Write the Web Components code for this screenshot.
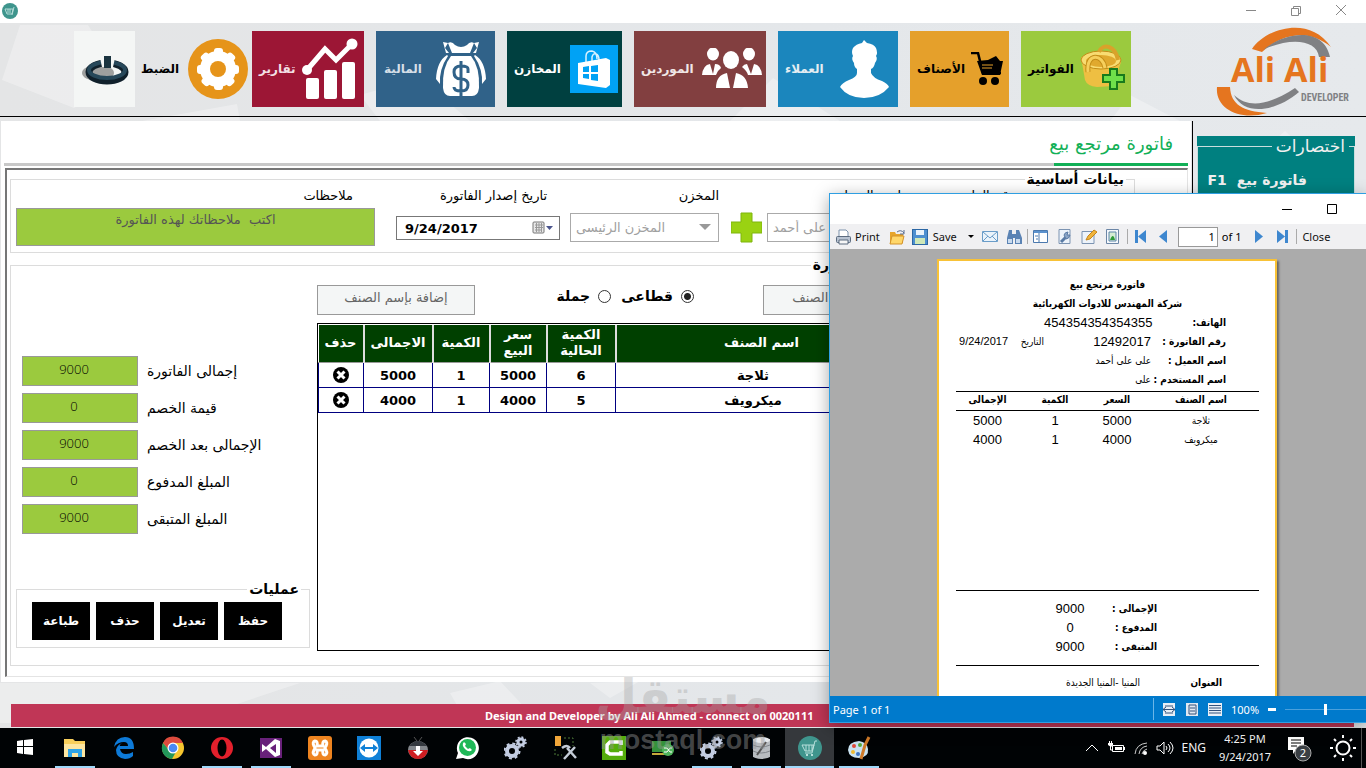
<!DOCTYPE html>
<html lang="ar">
<head>
<meta charset="utf-8">
<title>فاتورة مرتجع بيع</title>
<style>
  html, body { margin: 0; height: 100%; }
  body { font-family: "DejaVu Sans", sans-serif; font-size: 12px; color: #000; overflow: hidden; background: #e4e6e8; }
</style>
</head>
<body>
<desk-top></desk-top>

<script>
const define = (name, html, setup) => {
  const tpl = document.createElement('template');
  tpl.innerHTML = html;
  customElements.define(name, class extends HTMLElement {
    constructor() {
      super();
      this.attachShadow({ mode: 'open' }).append(tpl.content.cloneNode(true));
    }
    connectedCallback() { if (setup) setup(this.shadowRoot, this); }
  });
};

/* ---------- navigation ---------- */
define('nav-tile', `
<style>
  :host { display: block; flex: none; width: var(--w); }
  button { display: flex; align-items: center; justify-content: space-between; direction: rtl; width: 100%; height: 76px; margin: 0; padding: var(--pad, 0 6px 0 7px); border: 0; background: var(--bg, transparent); color: var(--fg, #fff); font: bold 12px "DejaVu Sans", sans-serif; white-space: nowrap; }
  ::slotted(svg) { display: block; flex: none; }
</style>
<button type="button"><slot></slot><span></span></button>`, (r, h) => {
  const label = h.getAttribute('label');
  if (label) r.querySelector('span').textContent = label;
  else { r.querySelector('span').remove(); r.querySelector('button').style.justifyContent = 'center'; r.querySelector('button').setAttribute('aria-label', 'خروج'); }
});

define('brand-logo', `
<style>:host { display: block; flex: none; width: 142px; height: 90px; direction: ltr; } svg { display: block; }</style>
<svg width="142" height="90" viewBox="0 0 142 90">
  <path d="M37 22C50 2 94-13 116 20C96 3 70 4 47 25Z" fill="#e5751f"/>
  <path d="M48 23C68 6 108-2 115 30L104 30C102 12 74 10 48 23Z" fill="#808184"/>
  <path d="M2 60H15C16 78 28 84 52 86C25 94 0 82 2 60Z" fill="#e5751f"/>
  <path d="M19 68C34 82 54 78 80 61L84 65C62 84 30 90 19 68Z" fill="#808184"/>
  <text x="16" y="55" font-family="Open Sans, sans-serif" font-weight="700" font-size="34" fill="#e5751f">Ali Ali</text>
  <text x="86" y="74" font-family="Liberation Sans Narrow, Roboto Condensed, DejaVu Sans Condensed, sans-serif" font-weight="700" font-size="10" fill="#808184">DEVELOPER</text>
</svg>`);

define('main-nav', `
<style>
  :host { display: flex; direction: rtl; box-sizing: border-box; height: 94px; padding: 8px 9px 0; gap: 12px; border-bottom: 1px solid #000; align-items: flex-start; }
  brand-logo { margin-left: 72px; margin-top: -4px; }
  .set { margin-right: -8px; margin-left: -6px; }
</style>
<brand-logo></brand-logo>
<nav-tile label="الفواتير" style="--w:110px;--bg:#9bca3e;--fg:#000">
  <svg width="46" height="50" viewBox="0 0 46 50"><path d="M2 13L6 36Q8 42 18 43L34 42L42 18Z" fill="#eebf42"/><ellipse cx="22" cy="16" rx="20" ry="9" fill="#f8dc72" stroke="#c28d18"/><ellipse cx="22" cy="17" rx="15" ry="6" fill="#e0a92e"/><path d="M20 8C24-1 36 1 39 16" fill="none" stroke="#d9a22a" stroke-width="4"/><path d="M9 28C7 8 24 10 26 24" fill="none" stroke="#c28d18" stroke-width="5"/><path d="M9 28C7 8 24 10 26 24" fill="none" stroke="#f6cf5c" stroke-width="3"/><path d="M31 25h7v6h7v7h-7v7h-7v-7h-7v-7h7z" fill="#6fe04a" stroke="#187a1c" stroke-width="2"/></svg>
</nav-tile>
<nav-tile label="الأصناف" style="--w:99px;--bg:#e5a02b;--fg:#000">
  <svg width="32" height="34" viewBox="0 0 32 34"><path d="M0 1h7l5 20h18" fill="none" stroke="#000" stroke-width="2.5"/><path d="M6 9l11-1 8-4 4 5h3l-3 14H11z"/><path d="M11 13h11M11 16h10" stroke="#e5a02b"/><circle cx="12" cy="29" r="4"/><circle cx="24" cy="29" r="4"/></svg>
</nav-tile>
<nav-tile label="العملاء" style="--w:120px;--bg:#1b86bd;--fg:#e4edf2;--pad:0 9px 0 7px">
  <svg width="49" height="58" viewBox="0 0 49 58"><path d="M24 0L27 3Q34 4 36 8Q38 13 36 16Q38 19 35 23Q34 28 31 29L31 33Q33 38 42 41Q48 44 49 47Q40 58 24 58Q8 58 0 47Q2 43 9 40Q17 37 17 33V29Q14 27 14 23Q11 19 13 16Q11 12 13 8Q16 4 22 3Z" fill="#fff"/></svg>
</nav-tile>
<nav-tile label="الموردين" style="--w:132px;--bg:#823f40;--fg:#f0e6e6;--pad:0 4px 0 7px">
  <svg width="60" height="42" viewBox="0 0 60 42"><g fill="#fff"><ellipse cx="11" cy="6" rx="6" ry="6.500"/><ellipse cx="47" cy="6" rx="6" ry="6.500"/><path d="M0 27Q1 17 8 16L11 26L13 16Q18 16 19 20Q15 23 14 27ZM60 27Q59 17 52 16L49 26L45 16Q42 16 40 19Q45 23 46 27Z"/><ellipse cx="29" cy="12" rx="8" ry="9"/><path d="M14 40Q14 27 25 25L28 40ZM46 40Q45 27 34 25L31 40Z"/></g></svg>
</nav-tile>
<nav-tile label="المخازن" style="--w:115px;--bg:#004040;--pad:0 4px 0 7px">
  <svg width="48" height="48" viewBox="0 0 48 48"><path fill="#00a2f5" d="M0 0h48v48H0z"/><path d="M16 18V11Q16 6 22 6Q27 7 27 14M22 16V12Q23 8 26 9Q29 10 29 15" fill="none" stroke="#d8f2ff" stroke-width="1.500"/><path d="M8 18L36 13L40 15V40L36 43L8 39Z" fill="#fff"/><path d="M13 22L19 21V27H13ZM21 21L28 20V27H21ZM13 29H19V34L13 33ZM21 29H28V36L21 35Z" fill="#00a2f5"/></svg>
</nav-tile>
<nav-tile label="المالية" style="--w:119px;--bg:#306289;--fg:#d6dfe7;--pad:0 9px 0 8px">
  <svg width="50" height="56" viewBox="0 0 50 56"><g fill="#fff"><path d="M12 2Q16 0 19 4Q25 8 31 4Q34 0 38 2L34 12H16Z"/><path d="M15 15H35Q44 26 43 47Q42 55 36 55H14Q8 55 7 47Q6 26 15 15Z"/><path d="M11 14Q1 20 0 38L4 43Q3 28 12 15ZM39 14Q49 20 50 38L46 43Q47 28 38 15Z"/><path d="M7 1l5 1-3 5 4 5h-3zM43 1l-5 1 3 5-4 5h3z"/></g><path d="M32 32V28Q32 25 25 25Q18 25 18 31Q18 38 25 38Q32 38 32 44Q32 50 25 50Q18 50 18 46M25 20V55" fill="none" stroke="#306289" stroke-width="3"/></svg>
</nav-tile>
<nav-tile label="تقارير" style="--w:112px;--bg:#9c1635;--fg:#f2dfe3">
  <svg width="56" height="62" viewBox="0 0 56 62"><g fill="#fff"><circle cx="50" cy="6" r="5.500"/><circle cx="5" cy="32" r="5"/><rect x="4" y="40" width="13" height="21" rx="2"/><rect x="22" y="32" width="13" height="29" rx="2"/><rect x="40" y="24" width="13" height="37" rx="2"/></g><path d="M5 32L23 11L34 22L50 6" fill="none" stroke="#fff" stroke-width="5"/></svg>
</nav-tile>
<nav-tile class="set" label="الضبط" style="--w:107px;--fg:#000;--pad:0">
  <svg width="60" height="60" viewBox="0 0 60 60"><circle cx="30" cy="30" r="30" fill="#e6941a"/><g fill="#fff"><circle cx="30" cy="30" r="18"/><rect x="26" y="9" width="9" height="42" rx="3"/><rect x="26" y="9" width="9" height="42" rx="3" transform="rotate(45 30 30)"/><rect x="26" y="9" width="9" height="42" rx="3" transform="rotate(90 30 30)"/><rect x="26" y="9" width="9" height="42" rx="3" transform="rotate(135 30 30)"/></g><circle cx="30" cy="30" r="8" fill="#e6941a"/></svg>
</nav-tile>
<nav-tile style="--w:61px;--bg:#f4f6f5;--pad:0">
  <svg width="50" height="34" viewBox="0 0 50 34"><ellipse cx="18" cy="21" rx="16" ry="8" fill="#000" opacity=".35"/><ellipse cx="27" cy="20" rx="18" ry="9" fill="none" stroke="#10202b" stroke-width="7"/><ellipse cx="27" cy="18" rx="18" ry="8" fill="none" stroke="#27485a" stroke-width="4"/><path d="M20 6h15l-2 9H22z" fill="#f4f6f5"/><path d="M24 4h7v12h-7z" fill="#1b3440"/></svg>
</nav-tile>`);

/* ---------- form building blocks ---------- */
define('form-section', `
<style>
  :host { display: block; }
  fieldset { box-sizing: border-box; width: 100%; height: 100%; margin: 0; padding: 0; border: 1px solid #dcdcdc; direction: rtl; min-width: 0; }
  legend { padding: 0 2px; margin: 0 8px; height: 16px; font-size: 14px; line-height: 16px; font-weight: bold; }
  div { direction: ltr; }
</style>
<fieldset><legend></legend><div><slot></slot></div></fieldset>`, (r, h) => {
  r.querySelector('legend').textContent = h.getAttribute('legend');
});

const fieldCss = `
  :host { display: block; flex: none; width: var(--w); }
  label { display: block; height: 20px; font-size: 13px; line-height: 18px; direction: rtl; white-space: nowrap; }
  .box { display: flex; align-items: center; height: 40px; position: relative; }`;
const fieldSetup = (r, h) => {
  r.querySelector('label').textContent = h.getAttribute('label');
  const c = r.querySelector('input, select, textarea');
  const v = h.getAttribute('value');
  if (c.tagName === 'SELECT') c.append(new Option(v)); else if (c.tagName === 'TEXTAREA') c.placeholder = v; else c.value = v;
};
define('select-field', `
<style>${fieldCss}
  select { appearance: none; box-sizing: border-box; width: 100%; height: 29px; padding: 0 5px; border: 1px solid #aaa; border-radius: 0; background: #fff; color: #a0a0a0; opacity: 1; font: 13px "DejaVu Sans", sans-serif; }
  .box::after { content: ""; position: absolute; right: 8px; border: 6px solid transparent; border-top-color: #999; border-bottom: 0; }
</style>
<label for="c"></label><div class="box"><select id="c" disabled></select></div>`, fieldSetup);
define('date-field', `
<style>${fieldCss}
  label { padding-right: 13px; }
  .in { display: flex; box-sizing: border-box; align-items: center; width: 100%; height: 24px; border: 1px solid #777; background: #fff; margin-top: 2px; }
  input { flex: 1; min-width: 0; border: 0; padding: 0 8px; font: bold 13px "DejaVu Sans", sans-serif; background: none; }
  svg { flex: none; margin-right: 5px; }
</style>
<label for="c"></label><div class="box"><div class="in"><input id="c"><svg width="22" height="14"><rect x="1" y="1" width="11" height="11" rx="1" fill="#e8e8e8" stroke="#777"/><path d="M3 4h8M3 6.500h8M3 9h6M4.500 2v9M7 2v9M9.500 2v9" stroke="#999"/><path d="M14 5h7l-3.500 4z" fill="#4a548c"/></svg></div></div>`, fieldSetup);
define('notes-field', `
<style>${fieldCss}
  label { padding-right: 22px; }
  textarea { box-sizing: border-box; width: 100%; height: 38px; margin: 0; padding: 3px; border: 1px solid #999; resize: none; background: #9bca3e; text-align: center; direction: rtl; font: 13px/16px "DejaVu Sans", sans-serif; overflow: hidden; }
  textarea::placeholder { color: #555; opacity: 1; white-space: pre; }
</style>
<label for="c"></label><div class="box"><textarea id="c"></textarea></div>`, fieldSetup);
define('total-field', `
<style>
  :host { display: flex; align-items: center; gap: 9px; height: 30px; }
  input { box-sizing: border-box; width: 116px; height: 30px; padding: 0 12px 4px 0; border: 1px solid #999; background: #9bca3e; color: #000; text-align: center; font: 300 13px "Open Sans", sans-serif; }
  label { font-size: 14px; direction: rtl; white-space: nowrap; }
</style>
<input id="c"><label for="c"></label>`, fieldSetup);

/* ---------- line items ---------- */
define('items-grid', `
<style>
  :host { display: block; box-sizing: border-box; border: 1px solid #000; padding: 1px 0; }
  table { border-collapse: collapse; table-layout: fixed; width: 573px; font-weight: bold; }
  th { height: 36px; padding: 0 2px 1px; background: #004000; color: #fff; font-size: 13px; line-height: 16px; border-right: 2px solid #ddd; border-bottom: 1px solid #999; white-space: nowrap; }
  th:last-child { border-right: 0; padding-left: 18px; }
  td { height: 24px; padding: 0; text-align: center; font-size: 13px; border: 1px solid #000080; }
  button { display: block; margin: 0 auto; padding: 0; border: 0; background: none; width: 16px; height: 16px; }
</style>
<table>
  <colgroup><col style="width:45px"><col style="width:69px"><col style="width:57px"><col style="width:57px"><col style="width:69px"><col></colgroup>
  <thead><tr><th>حذف</th><th>الاجمالى</th><th>الكمية</th><th>سعر<br>البيع</th><th>الكمية<br>الحالية</th><th>اسم الصنف</th></tr></thead>
  <tbody></tbody>
</table>`, r => {
  const rows = [['5000', '1', '5000', '6', 'ثلاجة'], ['4000', '1', '4000', '5', 'ميكرويف']];
  const x = '<button type="button" aria-label="حذف"><svg width="16" height="16" viewBox="0 0 16 16"><circle cx="8" cy="8" r="8"/><path d="M4.500 4.500l7 7M11.500 4.500l-7 7" stroke="#fff" stroke-width="3"/></svg></button>';
  r.querySelector('tbody').innerHTML = rows.map(c => `<tr><td>${x}</td>${c.map(v => `<td>${v}</td>`).join('')}</tr>`).join('');
});

define('price-type', `
<style>
  :host { display: flex; align-items: center; gap: 10px; font-size: 14px; font-weight: bold; }
  label { display: flex; align-items: center; gap: 8px; }
  input { appearance: none; width: 13px; height: 13px; margin: 0; border: 1px solid #333; border-radius: 50%; background: #fff; box-sizing: border-box; }
  input:checked { background: radial-gradient(circle, #222 0 3px, #fff 4px); }
</style>
<label>جملة<input type="radio" name="p"></label>
<label>قطاعى<input type="radio" name="p" checked></label>`);

define('operation-buttons', `
<style>
  :host { display: flex; gap: 6px; padding: 5px 0 7px 15px; }
  button { width: 58px; height: 38px; margin: 0; padding: 0; border: 0; background: #000; color: #fff; font: bold 12px "DejaVu Sans", sans-serif; }
</style>
<button type="button">طباعة</button><button type="button">حذف</button><button type="button">تعديل</button><button type="button">حفظ</button>`);

/* ---------- invoice page ---------- */
define('invoice-panel', `
<style>
  :host { display: flex; flex-direction: column; background: #fff; padding: 0 2px 5px 3px; box-sizing: border-box; }
  h1 { margin: 0; height: 42px; padding-right: 15px; border-bottom: 3px solid #c8c8c8; direction: rtl; font-size: 18px; line-height: 46px; font-weight: normal; color: #12b057; }
  h1 span { display: block; width: 119px; height: 42px; padding-right: 15px; margin-right: -15px; border-bottom: 3px solid #12b057; white-space: nowrap; }
  .frame { flex: 1; display: flex; flex-direction: column; gap: 4px; margin: 2px 0 0 1px; padding: 1px 52px 10px 3px; border: 2px solid; border-color: #767676 #e4e4e4 #e4e4e4 #767676; border-width: 2px 1px 1px 2px; min-height: 0; }
  .row { display: flex; padding: 0 0 5px 5px; }
  .row > * + * { margin-left: 10px; }
  .add { align-self: flex-end; width: 31px; height: 31px; margin: 0 0 4px 12px; padding: 0; border: 0; background: none; }
  .add + * { margin-left: 5px; }
  .lines { flex: 1; width: 920px; }
  .cols { display: grid; grid-template-columns: 294px 593px; gap: 7px; padding: 12px 0 13px 5px; box-sizing: border-box; height: 391px; }
  .left { display: flex; flex-direction: column; justify-content: space-between; }
  .totals { display: flex; flex-direction: column; gap: 7px; padding: 71px 0 0 6px; }
  .right { display: flex; flex-direction: column; gap: 8px; min-width: 0; }
  .bar { display: grid; grid-template-columns: 158px 1fr 158px; column-gap: 0; align-items: start; margin-right: -11px; }
  .bar input { box-sizing: border-box; width: 158px; height: 30px; padding: 0 0 5px; border: 1px solid #999; background: #f4f6f6; text-align: center; direction: rtl; font: 13px "DejaVu Sans", sans-serif; }
  .bar input::placeholder { color: #666; opacity: 1; }
  price-type { height: 22px; justify-content: flex-end; padding-right: 69px; }
  items-grid { flex: 1; }
  .ops { margin-bottom: 3px; }
</style>
<h1><span>فاتورة مرتجع بيع</span></h1>
<div class="frame">
  <form-section legend="بيانات أساسية">
    <div class="row">
      <notes-field label="ملاحظات" value="اكتب  ملاحظاتك لهذه الفاتورة" style="--w:359px"></notes-field>
      <date-field label="تاريخ إصدار الفاتورة" value="9/24/2017" style="--w:164px;margin-left:21px"></date-field>
      <select-field label="المخزن" value="المخزن الرئيسى" style="--w:149px"></select-field>
      <button class="add" type="button" aria-label="إضافة عميل"><svg width="31" height="31" viewBox="0 0 31 31"><path d="M10 1h11v9h10v11H21v9H10v-9H0V10h10z" fill="#9ad212" stroke="#7fb50d"/></svg></button>
      <select-field label="اسم العميل" value="على على أحمد" style="--w:134px"></select-field>
      <select-field label="رقم الفاتورة" value="12492017" style="--w:104px"></select-field>
    </div>
  </form-section>
  <form-section class="lines" legend="أصناف الفاتورة">
    <div class="cols">
      <div class="left">
        <div class="totals">
          <total-field label="إجمالى الفاتورة" value="9000"></total-field>
          <total-field label="قيمة الخصم" value="0"></total-field>
          <total-field label="الإجمالى بعد الخصم" value="9000"></total-field>
          <total-field label="المبلغ المدفوع" value="0"></total-field>
          <total-field label="المبلغ المتبقى" value="9000"></total-field>
        </div>
        <form-section class="ops" legend="عمليات"><operation-buttons></operation-buttons></form-section>
      </div>
      <div class="right">
        <div class="bar">
          <input aria-label="إضافة بإسم الصنف" placeholder="إضافة بإسم الصنف">
          <price-type></price-type>
          <input aria-label="إضافة بكود الصنف" placeholder="إضافة بكود الصنف">
        </div>
        <items-grid></items-grid>
      </div>
    </div>
  </form-section>
</div>`);

define('shortcuts-panel', `
<style>
  :host { display: block; box-sizing: border-box; background: #008080; color: #f0f0f0; direction: rtl; padding: 1px 0; }
  fieldset { margin: 0; padding: 0; border: 1px solid #c8dede; border-width: 1px 1px 0; height: 100%; box-sizing: border-box; }
  legend { margin-right: 5px; padding: 0 4px; font-size: 17px; line-height: 18px; }
  p { margin: 15px 47px 0 0; display: flex; gap: 10px; line-height: 20px; font-size: 14px; font-weight: bold; white-space: nowrap; }
</style>
<fieldset><legend>اختصارات</legend><p><span>فاتورة بيع</span><span>F1</span></p></fieldset>`);

define('app-window', `
<style>
  :host { display: flex; flex-direction: column; min-height: 0; position: relative; }
  .title { display: flex; align-items: flex-start; height: 23px; background: #fff; }
  .title > svg { margin: 3px 0 0 2px; }
  .win { display: flex; gap: 0; margin-left: auto; }
  .win button { width: 46px; height: 21px; padding: 0; border: 0; background: none; display: block; }
  .body { flex: 1; display: flex; flex-direction: column; min-height: 0; position: relative; background: linear-gradient(90deg, #e4e5e6, #e4e7ea 60%, #e6e9ec); }
  .bg { position: absolute; inset: 0; width: 100%; height: 100%; }
  main-nav { position: relative; flex: none; }
  .work { flex: 1; position: relative; display: flex; min-height: 0; padding: 4px 11px 0 1px; }
  invoice-panel { flex: 1; min-width: 0; border-right: 1px solid #fff; }
  .rule { width: 1px; background: #000; margin: 0 4px 0 1px; }
  shortcuts-panel { width: 158px; margin-top: 15px; flex: none; }
  footer { position: relative; margin: 22px 12px 1px 11px; height: 23px; padding-left: 474px; background: #c03656; color: #fff; font: bold 11px/23px "Noto Sans", sans-serif; white-space: nowrap; }
</style>
<div class="title">
  <svg width="17" height="17" viewBox="0 0 17 17"><circle cx="8" cy="8" r="8" fill="#3f958d"/><path d="M3 6h8l-1 5H5zM12 4l-2 8M6 6v4M8 6v4" stroke="#b5dcd8" fill="none"/></svg>
  <div class="win">
    <button type="button" aria-label="Minimize"><svg width="46" height="20"><path d="M18 10.500h10" stroke="#888"/></svg></button>
    <button type="button" aria-label="Restore"><svg width="46" height="20"><path d="M17.500 8.500h7v7h-7zM19.500 8V6.500h7v7H25" fill="none" stroke="#888"/></svg></button>
    <button type="button" aria-label="Close"><svg width="46" height="20"><path d="M16 5l10 10M26 5l-10 10" stroke="#888"/></svg></button>
  </div>
</div>
<div class="body">
  <svg class="bg" preserveAspectRatio="none" viewBox="0 0 1366 705"><g fill="#fff" opacity=".3"><path d="M20 2H88L124 60 74 85 2 57Z"/><path d="M142 98L237 81 240 98ZM730 98L773 55 840 98ZM360 72L420 55 470 98H380ZM1130 72L1180 98H1110ZM1260 130L1285 108 1300 122Z"/><path d="M0 660L300 660 180 700H0ZM450 670L500 658 530 690 470 705ZM590 660L610 675 640 658Z"/></g></svg>
  <main-nav></main-nav>
  <div class="work"><invoice-panel></invoice-panel><div class="rule"></div><shortcuts-panel></shortcuts-panel></div>
  <footer>Design and Developer by Ali Ali Ahmed - connect on 0020111</footer>
</div>`);

/* ---------- print preview ---------- */
define('receipt-page', `
<style>
  :host { display: block; box-sizing: border-box; width: 340px; min-height: 480px; padding: 14px 16px 0 17px; border: 2px solid #f8c237; background: #fff; box-shadow: 2px 2px 2px #666; direction: rtl; font: 10px/19px "DejaVu Sans Condensed", "DejaVu Sans", sans-serif; color: #000; }
  h2 { margin: 0; font-size: 10px; line-height: 19px; text-align: center; }
  .meta, .sum, .addr { display: grid; margin: 0; grid-auto-rows: 19px; white-space: nowrap; }
  .meta { grid-template-columns: 75px 107px 36px 1fr; padding-right: 33px; margin-bottom: 2px; }
  .n, .sum dd { font: 13px/19px "Liberation Sans", sans-serif; }
  .d { font: 11px/19px "Liberation Sans", sans-serif; }
  dd, dt { margin: 0; }
  dt { font-weight: bold; }
  .wide { grid-column: 2 / -1; }
  .meta .n { direction: ltr; text-align: right; }
  table { border-collapse: collapse; width: 100%; table-layout: fixed; }
  .lines { height: 199px; }
  th { height: 18px; padding: 0; border: 1px solid #000; border-width: 1px 0; line-height: 15px; vertical-align: top; }
  td { height: 19px; padding: 0; text-align: center; line-height: 19px; }
  .sum { border: 1px solid #000; border-width: 1px 0; padding: 8px 102px 9px 0; grid-template-columns: 60px 54px; }
  .sum dd { text-align: center; }
  .addr { grid-template-columns: 82px 1fr; padding: 7px 37px 0 0; }
</style>
<h2>فاتورة مرتجع بيع</h2>
<h2>شركة المهندس للادوات الكهربائية</h2>
<dl class="meta">
  <dt>الهاتف:</dt><dd class="n">454354354354355</dd><dd></dd><dd></dd>
  <dt>رقم الفاتورة :</dt><dd class="n">12492017</dd><dd>التاريخ</dd><dd class="d">9/24/2017</dd>
  <dt>اسم العميل :</dt><dd class="wide">على على أحمد</dd>
  <dt>اسم المستخدم :</dt><dd class="wide">على</dd>
</dl>
<div class="lines"><table>
  <colgroup><col style="width:116px"><col style="width:52px"><col style="width:72px"><col></colgroup>
  <tr><th>اسم الصنف</th><th>السعر</th><th>الكمية</th><th>الإجمالى</th></tr>
  <tr><td>ثلاجة</td><td class="n">5000</td><td class="n">1</td><td class="n">5000</td></tr>
  <tr><td>ميكرويف</td><td class="n">4000</td><td class="n">1</td><td class="n">4000</td></tr>
</table></div>
<dl class="sum"><dt>الإجمالى :</dt><dd>9000</dd><dt>المدفوع :</dt><dd>0</dd><dt>المتبقى :</dt><dd>9000</dd></dl>
<dl class="addr"><dt>العنوان</dt><dd>المنيا -المنيا الجديدة</dd></dl>`);

define('preview-window', `
<style>
  :host { display: flex; flex-direction: column; box-sizing: border-box; border: 1px solid #2f9fe2; border-right: 0; background: #ababab; box-shadow: 0 4px 16px rgba(0,0,0,.35); font: 11px "Noto Sans", sans-serif; overflow: hidden; }
  header { display: flex; justify-content: flex-end; height: 30px; background: #fff; flex: none; }
  header button { width: 46px; height: 30px; padding: 0; border: 0; background: none; }
  header button:last-child { margin-right: 11px; }
  .tools { display: flex; align-items: center; height: 25px; flex: none; background: #f0f0f2; padding-left: 6px; }
  .tools button { display: flex; align-items: center; gap: 4px; padding: 0; border: 0; background: none; font: 11px "Noto Sans", sans-serif; color: #111; margin-right: 8px; }
  .tools svg { display: block; }
  .tools i { width: 1px; height: 15px; background: #aaa; margin-right: 5px; }
  .tools input { box-sizing: border-box; width: 40px; height: 20px; border: 1px solid #999; text-align: right; font: 11px "Noto Sans", sans-serif; padding: 0 2px; margin-right: 4px; }
  .canvas { flex: 1; min-height: 0; overflow: hidden; padding: 10px 0 0 107px; }
  .status { display: flex; align-items: center; height: 26px; flex: none; background: #007acc; color: #fff; padding-left: 3px; }
  .status .z { display: flex; align-items: center; gap: 9px; margin-left: auto; border-left: 1px solid #6cb6e8; height: 22px; padding-left: 8px; width: 213px; box-sizing: border-box; }
  .z svg { display: block; flex: none; }
  input[type=range] { appearance: none; flex: 1; min-width: 0; height: 12px; margin: 0; background: linear-gradient(#4aa0dc, #4aa0dc) center / 100% 1px no-repeat; }
  input[type=range]::-webkit-slider-thumb { appearance: none; width: 3px; height: 11px; background: #fff; }
</style>
<header>
  <button type="button" aria-label="Minimize"><svg width="46" height="30"><path d="M19 15.500h10" stroke="#000"/></svg></button>
  <button type="button" aria-label="Maximize"><svg width="46" height="30"><path d="M18.500 10.500h9v9h-9z" fill="none" stroke="#000"/></svg></button>
</header>
<div class="tools">
  <button type="button"><svg width="15" height="16"><path d="M3 1h7l2 2v5H3z" fill="#fff" stroke="#7d93ad"/><rect x=".5" y="7.500" width="14" height="6" rx="1" fill="#b8c3d2" stroke="#5c6c80"/><path d="M3 11h9v4H3z" fill="#f6f6f6" stroke="#5c6c80"/></svg>Print</button>
  <button type="button" aria-label="Open" style="margin-right:4px"><svg width="20" height="16"><path d="M2 3h5l1 2h7v9H2z" fill="#e7a52b"/><path d="M4 7h12l-2 8H2z" fill="#ffd76a" stroke="#d3922a"/><path d="M9 3q4-3 7 1M16 1v4h-4" fill="none" stroke="#5a6f92"/></svg></button>
  <button type="button" style="margin-right:11px"><svg width="17" height="16"><rect x=".5" y=".5" width="15" height="15" fill="#4d8fd0" stroke="#2c67a4"/><path fill="#e9f2fb" d="M4 1h8v5H4z"/><path fill="#cfe8b8" d="M3 9h10v6H3z"/></svg>Save</button>
  <button type="button" aria-label="Formats"><svg width="6" height="4"><path d="M0 0h6L3 3z"/></svg></button>
  <button type="button" aria-label="Mail"><svg width="16" height="12"><path d="M.5 .5h15v10H.5z" fill="#eaf3fb" stroke="#6a9dc9"/><path d="M1 1l7 6 7-6M1 10l5-5M15 10l-5-5" fill="none" stroke="#6a9dc9"/></svg></button>
  <button type="button" aria-label="Find" style="margin-right:5px"><svg width="16" height="16"><path d="M3 1h3v4h4V1h3l3 8v6H9V9H7v6H1V9z" fill="#5b83b4"/><path d="M2 10h4v4H2zM10 10h4v4h-4z" fill="#c9dbef"/></svg></button>
  <i></i>
  <button type="button" aria-label="Outline"><svg width="16" height="14"><path d="M.5 .5h14v12H.5z" fill="#fff" stroke="#4b79ae"/><path d="M1 1h13v2H1z" fill="#5c92ce"/><path d="M6 3v9M2 6h3M3 9h2" stroke="#4b79ae"/></svg></button>
  <button type="button" aria-label="Setup"><svg width="16" height="16"><path d="M2 .5h11v14H2z" fill="#edf3fa" stroke="#7c94b2"/><path d="M4 13l5-5" stroke="#5a7ba5" stroke-width="3"/><path d="M7 6q1-3 4-3l-1 3 3 0q-1 4-4 4z" fill="#8ba5c6" stroke="#5a7ba5"/></svg></button>
  <button type="button" aria-label="Edit"><svg width="17" height="16"><path d="M1 2.500h12v12H1z" fill="#edf3fa" stroke="#7c94b2"/><path d="M5 11l2-4 6-6 3 2-7 7z" fill="#f0b43c" stroke="#c68518"/></svg></button>
  <button type="button" aria-label="Watermark" style="margin-right:7px"><svg width="14" height="16"><path d="M.5 .5h12v14H.5z" fill="#f5f8fc" stroke="#6c86a6"/><path d="M3 3h7v9H3z" fill="#d5ecd4" stroke="#5d86a8"/><path d="M4 11q3-8 5 0z" fill="#2f9a3a"/></svg></button>
  <i style="margin-right:7px"></i>
  <button type="button" aria-label="First" style="margin-right:13px"><svg width="11" height="13"><path d="M0 0h3v13H0zM11 0v13L3 6.500z" fill="#3e87cf"/></svg></button>
  <button type="button" aria-label="Previous" style="margin-right:11px"><svg width="8" height="13"><path d="M8 0v13L0 6.500z" fill="#3e87cf"/></svg></button>
  <input value="1" aria-label="Page"><span>of 1</span>
  <button type="button" aria-label="Next" style="margin:0 14px"><svg width="8" height="13"><path d="M0 0v13l8-6.500z" fill="#3e87cf"/></svg></button>
  <button type="button" aria-label="Last"><svg width="11" height="13"><path d="M8 0h3v13H8zM0 0v13l8-6.500z" fill="#3e87cf"/></svg></button>
  <i></i>
  <button type="button">Close</button>
</div>
<div class="canvas"><receipt-page></receipt-page></div>
<div class="status"><span>Page 1 of 1</span>
  <div class="z">
    <svg width="14" height="13"><path fill="#e8eef6" d="M1 0h12v13H1z"/><path d="M3 3h8M3 10h8M1 6.500h12M4 4L1 6.500 4 9M10 4l3 2.500L10 9" stroke="#33527c" fill="none"/></svg>
    <svg width="14" height="13"><path fill="#dfe8f2" d="M1 0h12v13H1z"/><path d="M4 2h7v9H4zM5 5h5M5 8h5" stroke="#33527c" fill="none"/></svg>
    <svg width="14" height="13"><path fill="#e8eef6" d="M0 0h14v13H0z"/><path d="M1 2.500h12M1 5h12M1 7.500h12M1 10h12" stroke="#33527c"/></svg>
    <span>100%</span>
    <svg width="8" height="3"><path fill="#fff" d="M0 0h8v3H0z"/></svg>
    <input type="range" value="50" aria-label="Zoom">
  </div>
</div>`);

/* ---------- taskbar ---------- */
const gears = '<g fill="none" stroke="#c3cde2"><circle cx="8" cy="15" r="5" stroke-width="4"/><circle cx="8" cy="15" r="7.500" stroke-width="2" stroke-dasharray="3 2.900"/><circle cx="17" cy="6" r="3" stroke-width="3"/><circle cx="17" cy="6" r="5" stroke-width="1.500" stroke-dasharray="2 1.900"/></g>';
const apps = [
  ['File Explorer', '<path d="M1 3h9l2 2h10v16H1z" fill="#f8cf5c"/><path d="M1 8h21v13H1z" fill="#fde6a1"/><path d="M5 21v-8h14v8h-4v-4H9v4z" fill="#2fa4e7"/>', 1],
  ['Edge', '<path d="M2 11Q4 1 13 1Q22 1 22 13H8Q9 18 14 18Q18 18 21 16V20Q18 23 13 23Q4 22 4 14Q5 9 10 7Q7 9 8 10H16Q16 6 12 6Q6 6 2 11Z" fill="#0d7ad8"/>'],
  ['Chrome', '<circle cx="12" cy="12" r="11" fill="#f6c62f"/><path d="M2 7A11 11 0 0 1 22 7H12L8 14Z" fill="#dd4b3e"/><path d="M2 7A11 11 0 0 0 11 23L16 14H8Z" fill="#23985a"/><circle cx="12" cy="12" r="5.500" fill="#fff"/><circle cx="12" cy="12" r="4.300" fill="#4a8af4"/>'],
  ['Opera', '<ellipse cx="12" cy="12" rx="11" ry="11" fill="#e3202c"/><ellipse cx="12" cy="12" rx="4.500" ry="8.500" fill="#000"/>', 1],
  ['Visual Studio', '<path d="M1 2h22v20H1z" fill="#68217a"/><path d="M3 8l4 3 9-8 5 2v14l-5 2-9-8-4 3zM17 8l-6 4 6 5z" fill="#fff" fill-rule="evenodd"/>', 1],
  ['XAMPP', '<rect width="24" height="24" rx="3" fill="#ee8420"/><path d="M12 10h3Q14 5 17 5Q20 6 18 10Q16 12 18 14Q20 18 17 19Q14 19 15 14H9Q10 19 7 19Q4 18 6 14Q8 12 6 10Q4 6 7 5Q10 5 9 10Z" fill="none" stroke="#fff" stroke-width="3"/>'],
  ['TeamViewer', '<path fill="#0f80d7" d="M0 0h24v24H0z"/><circle cx="12" cy="12" r="9.500" fill="#fff"/><path d="M3 12l5-4v3h8V8l5 4-5 4v-3H8v3z" fill="#0f80d7"/>'],
  ['Downloader', '<path d="M8 1l3 4M16 1l-3 4" stroke="#555"/><ellipse cx="12" cy="14" rx="10" ry="9" fill="#83878c"/><path d="M2 14h20q-2 9-10 9T2 14z" fill="#cf1d22"/><path d="M3 10q9-10 18 0z" fill="#34393f"/><path d="M10 10h4v5h3l-5 5-5-5h3z" fill="#fff"/>'],
  ['WhatsApp', '<path d="M1 23l2-6A11 11 0 1 1 8 22Z" fill="#fff"/><circle cx="12.500" cy="11.500" r="8.500" fill="#20b858"/><path d="M9 6q-3 3 1 7t7 1l-2-2-2 1-3-3 1-2z" fill="#fff"/>'],
  ['Services', gears],
  ['Tools', '<path fill="#f0a63a" d="M2 0h6v10H2z"/><path d="M11 2h9v8M2 13v6h7" stroke="#4d7a38" fill="none" stroke-dasharray="2 2"/><path d="M9 12q5-4 8 0M14 12l9 10M22 11L11 23" stroke="#c4ccd8" stroke-width="2.500" fill="none"/>'],
  ['Camtasia', '<path fill="#54ad0b" d="M0 0h24v24H0z"/><path d="M19 9V6H8L5 9v7l3 2h11v-3" fill="none" stroke="#fff" stroke-width="3.500"/>'],
  ['Adapter', '<path d="M1 5h19v11H1z" fill="#35913c"/><path d="M1 17h13v2H1z" fill="#c6a93b"/><circle cx="17" cy="14" r="6" fill="#4fb35b"/><path d="M13 12h3l3 4h2M13 16h3l3-4h2" stroke="#fff" fill="none"/>'],
  ['Services console', gears, 1],
  ['Database', '<path d="M4 3h17v18H4z" fill="#b8bcc0"/><ellipse cx="12.500" cy="4" rx="8.500" ry="3" fill="#e6e8ea"/><ellipse cx="12.500" cy="20" rx="8.500" ry="3" fill="#b8bcc0"/><path d="M4 9q8 4 17 0M4 15q8 4 17 0" stroke="#80858a" fill="none"/><path d="M8 19l9-13" stroke="#555" stroke-width="2"/>', 1],
  ['Sales', '<circle cx="12" cy="12" r="12" fill="#3f958d"/><path d="M4 9h12l-2 6H7zM19 5h-2l-3 12H7M8 9v6M11 9v6M14 9v5" stroke="#b7dfdb" fill="none"/><path d="M8 19h2M13 19h2" stroke="#b7dfdb" stroke-width="2"/>', 2],
  ['Paint', '<path d="M12 5Q1 6 1 14Q2 22 12 22Q22 21 21 13Q20 6 12 5Z" fill="#c9e3f2"/><circle cx="7" cy="10" r="2" fill="#e14b3b"/><circle cx="13" cy="9" r="2" fill="#54a93d"/><circle cx="6" cy="16" r="2" fill="#f0ba31"/><circle cx="11" cy="18" r="2" fill="#3d74c4"/><path d="M22 1l-4 8-4 14" stroke="#cf7a29" stroke-width="3" fill="none"/>', 1]
];
define('task-button', `
<style>
  :host { display: block; flex: none; width: 49px; height: 40px; }
  button { display: flex; align-items: center; justify-content: center; box-sizing: border-box; width: 40px; height: 40px; margin: 0 auto; padding: 0; border: 0; background: none; }
  :host([open]) button { border-bottom: 2px solid #9fd8fa; padding-top: 2px; }
  :host([active]) { background: #35383c; }
  :host([active]) button { width: 49px; }
</style>
<button type="button"><slot></slot></button>`, (r, h) => r.querySelector('button').setAttribute('aria-label', h.getAttribute('name')));

define('task-bar', `
<style>
  :host { display: flex; height: 40px; background: #000305; color: #f4f4f4; font: 12px/18px "Noto Sans", sans-serif; }
  .start { width: 50px; height: 40px; padding: 0; border: 0; background: none; flex: none; }
  .apps { display: flex; }
  .tray { display: flex; align-items: center; margin-left: auto; padding-right: 4px; }
  .tray svg { display: block; flex: none; }
  .clock { width: 76px; text-align: center; font-size: 11px; margin-left: 1px; }
  .edge { width: 1px; height: 40px; background: #555; margin-left: 4px; }
</style>
<button class="start" type="button" aria-label="Start"><svg width="16" height="16"><path fill="#fff" d="M0 2l6-1v6H0zM7 1l9-1v7H7zM0 8h6v7l-6-1zM7 8h9v8l-9-1z"/></svg></button>
<div class="apps"></div>
<div class="tray">
  <svg width="14" height="8" style="margin-right:9px"><path d="M1 7l6-6 6 6" fill="none" stroke="#fff"/></svg>
  <svg width="17" height="14" style="margin-right:9px"><path d="M4.500 4.500h11v6h-11zM16.500 6v3" fill="none" stroke="#fff"/><path d="M7 6h7v3H7zM0 2h5v2l-2 2-3-2z" fill="#fff"/><path d="M1.500 0v2M3.500 0v2M2.500 5v4h2" stroke="#fff" fill="none"/></svg>
  <svg width="14" height="14" style="margin-right:8px"><path d="M1 13Q2 3 13 2M5 13Q6 6 13 5M8 13Q9 9 13 8" fill="none" stroke="#ccc"/><circle cx="11" cy="12" r="2" fill="#fff"/></svg>
  <svg width="18" height="14" style="margin-right:7px"><path d="M1 5h3l4-4v12l-4-4H1z" fill="none" stroke="#fff"/><path d="M10 5q2 2 0 4M12 3q4 4 0 8M14 1q6 6 0 12" fill="none" stroke="#fff"/></svg>
  <span>ENG</span>
  <div class="clock">4:25 PM<br>9/24/2017</div>
  <svg width="26" height="28" viewBox="0 0 26 28" style="margin:0 16px 0 4px"><path d="M1 3h16v13H9l-3 4v-4H1z" fill="#fff"/><path d="M4 6h10M4 9h10M4 12h6" stroke="#000"/><circle cx="16" cy="19" r="8" fill="#3a3f44" stroke="#aaa"/><text x="16" y="23" text-anchor="middle" font-size="11" font-family="Noto Sans, sans-serif" fill="#fff">2</text></svg>
  <svg width="28" height="28"><circle cx="14" cy="14" r="6.500" fill="none" stroke="#fff" stroke-width="2"/><path d="M14 1v3M14 24v3M1 14h3M24 14h3M5 5l2 2M21 21l2 2M5 23l2-2M21 7l2-2" stroke="#fff" stroke-width="2"/></svg>
  <div class="edge"></div>
</div>`, r => {
  r.querySelector('.apps').innerHTML = apps.map(([n, g, s]) => `<task-button name="${n}"${s ? ' open' : ''}${s === 2 ? ' active' : ''}><svg width="24" height="24" viewBox="0 0 24 24">${g}</svg></task-button>`).join('');
});

define('water-mark', `
<style>
  :host { display: flex; flex-direction: column; align-items: center; justify-content: flex-end; width: 170px; pointer-events: none; color: rgba(165,165,165,.4); white-space: nowrap; }
  .ar { font: bold 48px/58px "DejaVu Sans", sans-serif; direction: rtl; }
  .en { font: bold 27px/30px "Liberation Sans", sans-serif; color: rgba(150,150,150,.45); }
</style>
<span class="ar">مستقل</span><span class="en">mostaql.com</span>`);

define('desk-top', `
<style>
  :host { display: flex; flex-direction: column; height: 100vh; min-height: 768px; position: relative; }
  app-window { flex: 1; }
  task-bar { flex: none; }
  preview-window { position: absolute; top: 193px; left: 829px; right: 0; bottom: 45px; }
  water-mark { position: absolute; left: 598px; bottom: 13px; }
</style>
<app-window></app-window>
<preview-window></preview-window>
<task-bar></task-bar>
<water-mark></water-mark>`);
</script>
</body>
</html>
